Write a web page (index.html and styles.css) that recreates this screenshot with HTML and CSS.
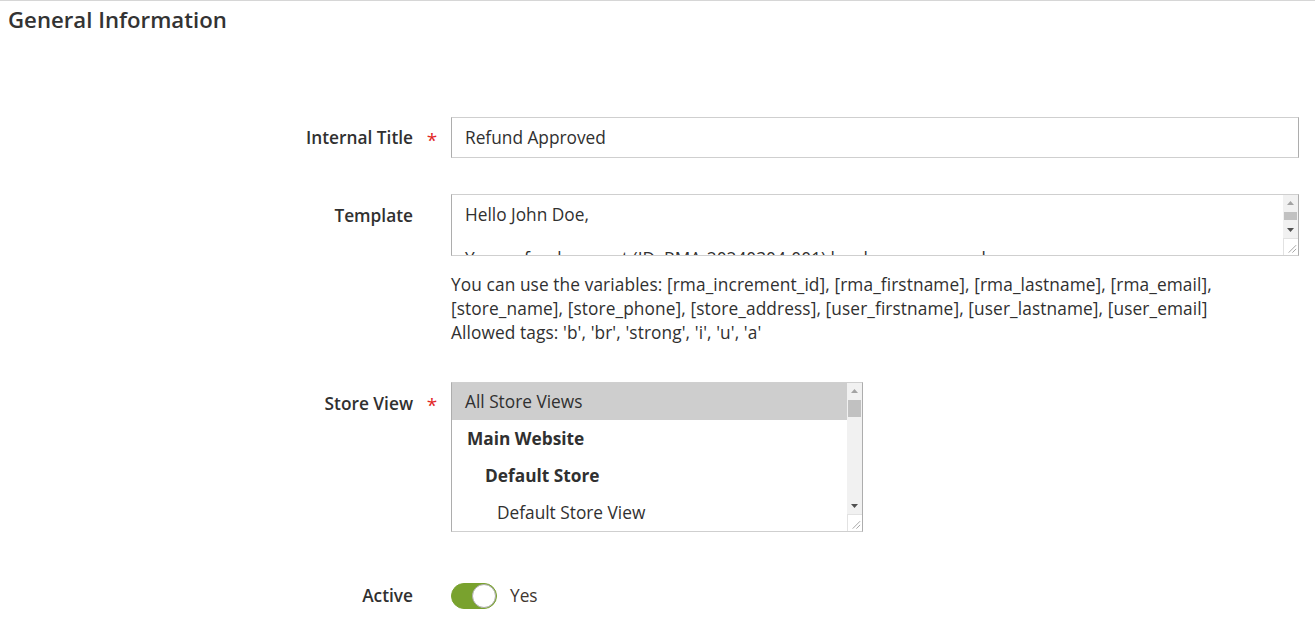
FILE: index.html
```html
<!DOCTYPE html>
<html lang="en">
<head>
  <meta charset="UTF-8" />
  <meta name="viewport" content="width=device-width, initial-scale=1" />
  <title>Edit Template</title>
  <link rel="stylesheet" href="styles.css">
</head>
<body>

  <div class="fieldset">
    <h2 class="fieldset-title">General Information</h2>

    <div class="fields">
      <!-- internal title -->
      <div class="field field-title">
        <label class="field-label" for="title">Internal Title</label>
        <span class="req">*</span>
        <div class="field-control">
          <input type="text" id="title" class="control-text" value="Refund Approved">
        </div>
      </div>

      <!-- template -->
      <div class="field field-template">
        <label class="field-label" for="template">Template</label>
        <span class="req"></span>
        <div class="field-control">
          <div class="scroll-box">
            <textarea id="template" class="control-textarea">Hello John Doe,

Your refund request (ID: RMA-20240304-001) has been approved.
The amount will be returned to your original payment method within 5-7 business days.

If you have any questions, please contact us at [store_phone].

Thank you,
[store_name]</textarea>
            <div class="fake-scroll fake-scroll-sm">
              <span class="sb-btn"><svg width="7" height="4" viewBox="0 0 7 4"><path d="M0 4 3.5 0 7 4z" fill="#a3a3a3"/></svg></span>
              <span class="sb-track"><span class="sb-thumb"></span></span>
              <span class="sb-btn"><svg width="7" height="4" viewBox="0 0 7 4"><path d="M0 0 3.5 4 7 0z" fill="#505050"/></svg></span>
              <span class="sb-corner"><svg width="15" height="15" viewBox="0 0 15 15"><path d="M13 5 5 13M13 9 9 13" stroke="#a0a0a0" stroke-width="1"/></svg></span>
            </div>
          </div>
          <div class="field-note">You can use the variables: [rma_increment_id], [rma_firstname], [rma_lastname], [rma_email], [store_name], [store_phone], [store_address], [user_firstname], [user_lastname], [user_email]<br>Allowed tags: 'b', 'br', 'strong', 'i', 'u', 'a'</div>
        </div>
      </div>

      <!-- store view -->
      <div class="field field-store">
        <label class="field-label" for="stores">Store View</label>
        <span class="req">*</span>
        <div class="field-control">
          <div class="scroll-box scroll-box-select">
            <select id="stores" class="control-multiselect" multiple>
              <option value="0" class="lvl-0" selected>All Store Views</option>
              <option value="w1" class="lvl-1" disabled>Main Website</option>
              <option value="g1" class="lvl-2" disabled>Default Store</option>
              <option value="1" class="lvl-3">Default Store View</option>
              <option value="w2" class="lvl-1" disabled>EU Website</option>
              <option value="g2" class="lvl-2" disabled>EU Store</option>
              <option value="2" class="lvl-3">English</option>
              <option value="3" class="lvl-3">German</option>
              <option value="4" class="lvl-3">French</option>
              <option value="5" class="lvl-3">Spanish</option>
              <option value="6" class="lvl-3">Italian</option>
              <option value="w3" class="lvl-1" disabled>US Website</option>
              <option value="g3" class="lvl-2" disabled>US Store</option>
              <option value="7" class="lvl-3">US English</option>
              <option value="8" class="lvl-3">US Spanish</option>
              <option value="w4" class="lvl-1" disabled>Wholesale Website</option>
              <option value="g4" class="lvl-2" disabled>Wholesale Store</option>
              <option value="9" class="lvl-3">Wholesale View</option>
              <option value="10" class="lvl-3">B2B View</option>
              <option value="11" class="lvl-3">Outlet View</option>
            </select>
            <div class="fake-scroll fake-scroll-lg">
              <span class="sb-btn"><svg width="7" height="4" viewBox="0 0 7 4"><path d="M0 4 3.5 0 7 4z" fill="#a3a3a3"/></svg></span>
              <span class="sb-track"><span class="sb-thumb"></span></span>
              <span class="sb-btn"><svg width="7" height="4" viewBox="0 0 7 4"><path d="M0 0 3.5 4 7 0z" fill="#505050"/></svg></span>
              <span class="sb-corner"><svg width="15" height="15" viewBox="0 0 15 15"><path d="M13 5 5 13M13 9 9 13" stroke="#a0a0a0" stroke-width="1"/></svg></span>
            </div>
          </div>
        </div>
      </div>

      <!-- active -->
      <div class="field field-active">
        <label class="field-label" for="active">Active</label>
        <span class="req"></span>
        <div class="field-control">
          <label class="switch">
            <input type="checkbox" id="active" checked>
            <span class="switch-track"></span>
            <span class="switch-text">Yes</span>
          </label>
        </div>
      </div>
    </div>
  </div>

</body>
</html>
```

FILE: styles.css
```css
html, body {
  margin: 0;
  background: #fff;
}

body {
  font-family: "Open Sans", "Liberation Sans", sans-serif;
  color: #303030;
  font-size: 17.3px;
}

.fieldset {
  border-top: 1px solid #d6d6d6;
  padding: 0 16px 0 8px;
}

.fieldset-title {
  margin: 0;
  padding-top: 4px;
  font-size: 22.2px;
  line-height: 30px;
  font-weight: 600;
  color: #333;
}

.fields {
  padding-top: 82px;
}

.field {
  display: grid;
  grid-template-columns: 405px 38px 1fr;
  align-items: start;
}

.field-label {
  text-align: right;
  font-weight: 600;
  font-size: 17.3px;
  line-height: 22px;
  padding-top: 10px;
  color: #303030;
}

.req {
  text-align: center;
  color: #e22626;
  font-size: 19px;
  line-height: 22px;
  padding-top: 12px;
}

.field-control {
  min-width: 0;
}

.field-template {
  margin-top: 36px;
}

.field-template .field-label {
  padding-top: 11px;
}

.field-store {
  margin-top: 37px;
}

.field-store .field-label {
  padding-top: 11px;
}

.field-active {
  margin-top: 51px;
}

.field-active .field-label,
.field-active .req {
  padding-top: 2px;
}

.control-text,
.control-textarea,
.control-multiselect {
  display: block;
  box-sizing: border-box;
  width: 100%;
  font-family: "Open Sans", "Liberation Sans", sans-serif;
  font-size: 17.3px;
  color: #303030;
  background: #fff;
  border: 1px solid #adadad;
  border-top-color: #cfcfcf;
  border-bottom-color: #cfcfcf;
  border-radius: 0;
  outline: none;
  margin: 0;
}

.control-text {
  height: 41px;
  padding: 0 13px;
}

.control-textarea {
  height: 62px;
  padding: 9px 28px 9px 13px;
  line-height: 22px;
  resize: none;
  overflow: hidden;
}

.field-note {
  margin-top: 17px;
  line-height: 24px;
  font-size: 17.3px;
  letter-spacing: 0.1px;
  color: #303030;
}

.scroll-box {
  position: relative;
}

.scroll-box-select {
  width: 412px;
}

.control-multiselect {
  height: 150px;
  padding: 0;
  overflow: hidden;
}

.control-multiselect option {
  padding: 7px 13px;
  color: #303030;
}

.control-multiselect option:disabled {
  font-weight: 700;
  color: #303030;
}

.control-multiselect option:checked {
  background: #cecece linear-gradient(#cecece, #cecece);
  color: #303030;
}

.control-multiselect .lvl-1 {
  padding-left: 15px;
}

.control-multiselect .lvl-2 {
  padding-left: 33px;
}

.control-multiselect .lvl-3 {
  padding-left: 45px;
}

/* drawn scrollbar, sits over the right edge of the box */
.fake-scroll {
  position: absolute;
  top: 1px;
  right: 1px;
  bottom: 1px;
  width: 15px;
  display: flex;
  flex-direction: column;
  background: #f1f1f1;
}

.sb-btn {
  height: 16px;
  flex: none;
  display: flex;
  align-items: center;
  justify-content: center;
}

.sb-track {
  flex: 1;
  padding: 1px 1px 0;
}

.sb-thumb {
  display: block;
  background: #c1c1c1;
}

.fake-scroll-sm .sb-thumb {
  height: 8px;
}

.fake-scroll-lg .sb-thumb {
  height: 17px;
}

.sb-corner {
  flex: none;
  height: 17px;
  box-sizing: border-box;
  background: #fff;
  border-top: 1px solid #e2e2e2;
  border-left: 1px solid #e2e2e2;
  display: flex;
  align-items: flex-end;
  justify-content: flex-end;
}

.sb-corner svg {
  display: block;
}

.switch {
  display: inline-flex;
  align-items: center;
  gap: 13px;
  cursor: pointer;
}

.switch input {
  display: none;
}

.switch-track {
  position: relative;
  box-sizing: border-box;
  width: 46px;
  height: 26px;
  border-radius: 13px;
  background: #e3e3e3;
  border: 1px solid #adadad;
}

.switch-track::after {
  content: "";
  position: absolute;
  top: 0;
  left: 0;
  box-sizing: border-box;
  width: 24px;
  height: 24px;
  border-radius: 50%;
  background: #fff;
  border: 1px solid #adadad;
}

.switch input:checked + .switch-track {
  background: #79a22e;
  border-color: #79a22e;
}

.switch input:checked + .switch-track::after {
  left: 20px;
}

.switch-text {
  font-size: 17.3px;
  line-height: 26px;
  color: #41362f;
}
```
